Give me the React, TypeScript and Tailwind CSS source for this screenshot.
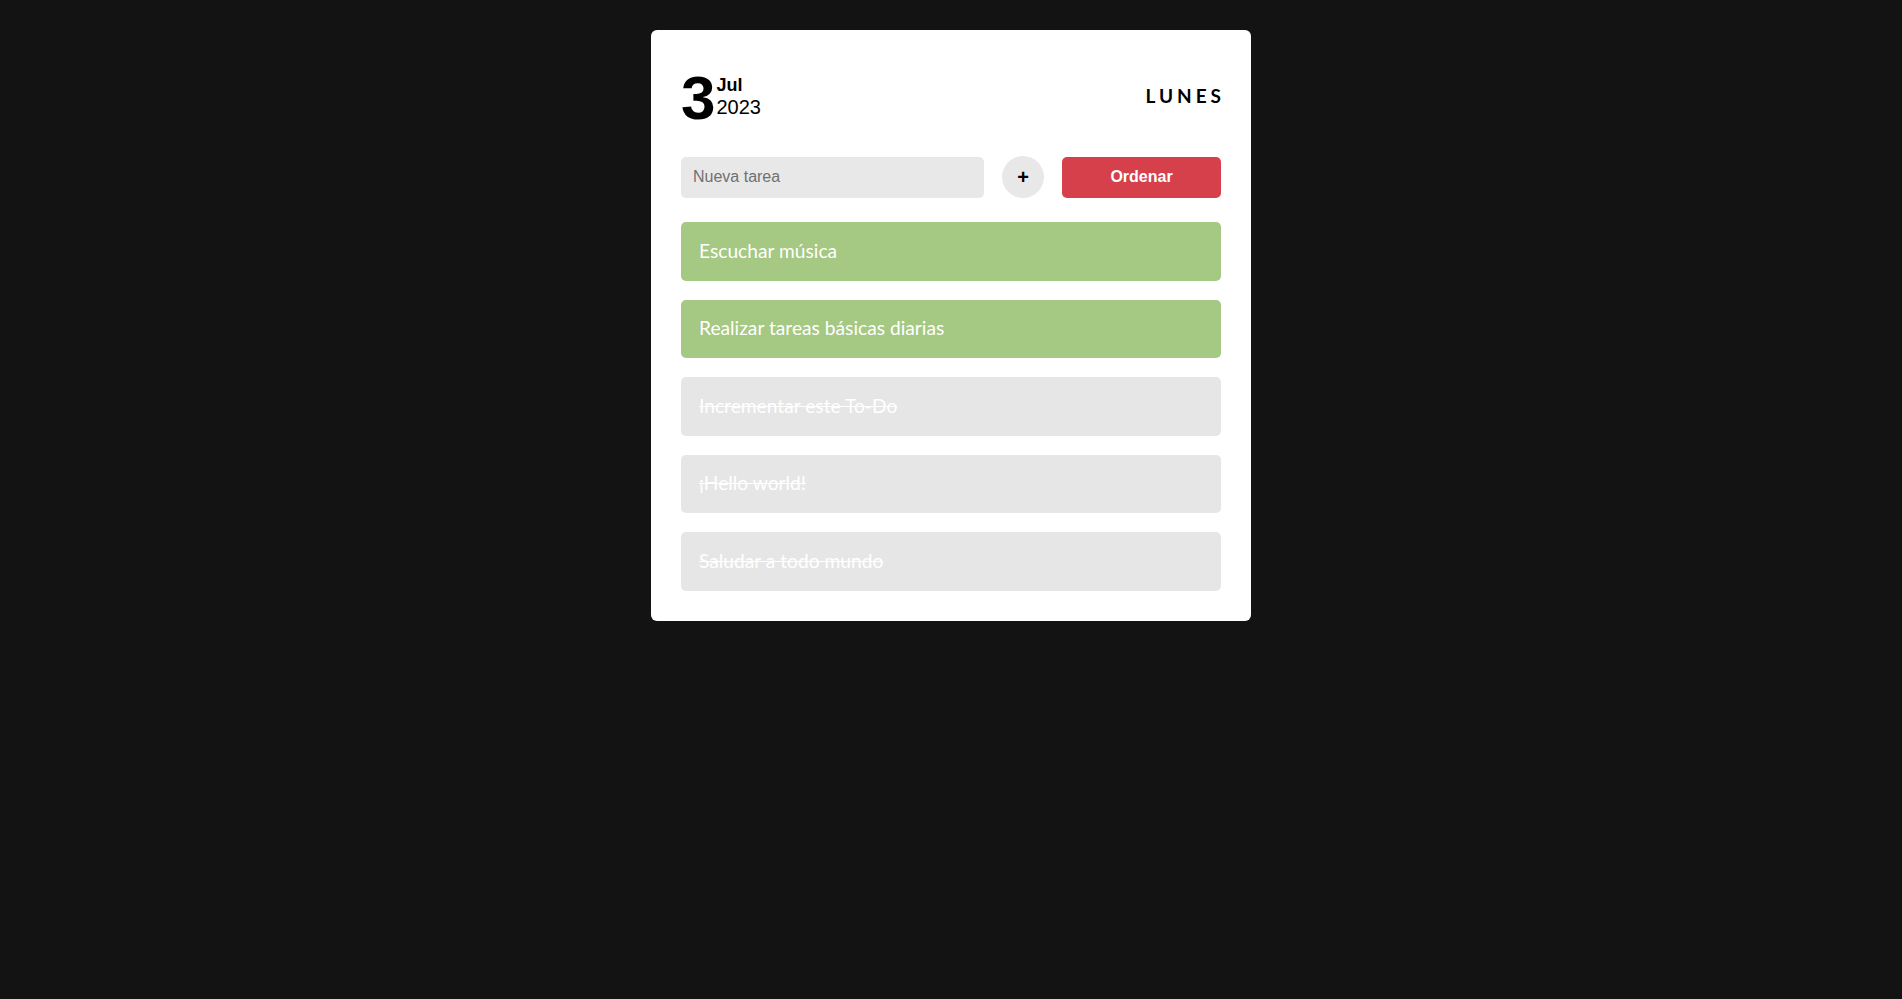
import { useState } from 'react';

interface Task {
  id: number;
  text: string;
  done: boolean;
}

const initialTasks: Task[] = [
  { id: 1, text: 'Escuchar música', done: false },
  { id: 2, text: 'Realizar tareas básicas diarias', done: false },
  { id: 3, text: 'Incrementar este To-Do', done: true },
  { id: 4, text: '¡Hello world!', done: true },
  { id: 5, text: 'Saludar a todo mundo', done: true },
];

export default function App() {
  const [tasks, setTasks] = useState<Task[]>(initialTasks);
  const [value, setValue] = useState('');

  const addTask = () => {
    if (!value.trim()) return;
    setTasks([...tasks, { id: Date.now(), text: value, done: false }]);
    setValue('');
  };

  const toggle = (id: number) => {
    setTasks(tasks.map((t) => (t.id === id ? { ...t, done: !t.done } : t)));
  };

  const sortTasks = () => {
    setTasks([...tasks].sort((a, b) => Number(a.done) - Number(b.done)));
  };

  return (
    <div className="min-h-screen bg-[#131313] flex justify-center items-start pt-[30px]">
      <div className="w-[600px] bg-white rounded-[6px] p-[30px]">
        {/* Header */}
        <div className="h-[72px] mb-[24px] flex items-center justify-between">
          <div className="flex items-start pt-[4px] font-['Liberation_Sans',Arial,sans-serif] text-black">
            <span className="text-[62px] leading-[62px] font-bold">3</span>
            <div className="flex flex-col mt-[8px] ml-[1px]">
              <span className="text-[18px] leading-[20px] font-bold">Jul</span>
              <span className="text-[20px] leading-[24px]">2023</span>
            </div>
          </div>
          <div className="font-['Lato',sans-serif] font-bold text-[19px] tracking-[4px] -mr-[4px] text-black">
            LUNES
          </div>
        </div>

        {/* Input row */}
        <div className="flex items-center gap-[18px] mb-[24px]">
          <input
            value={value}
            onChange={(e) => setValue(e.target.value)}
            placeholder="Nueva tarea"
            className="flex-1 min-w-0 h-[41px] rounded-[5px] bg-[#e8e8e9] px-[12px] text-[16px] font-['Liberation_Sans',Arial,sans-serif] text-black placeholder:text-[#707070] outline-none"
          />
          <button
            onClick={addTask}
            className="w-[42px] h-[42px] rounded-full bg-[#e8e8e9] flex items-center justify-center text-[20px] font-bold text-black font-['Liberation_Sans',Arial,sans-serif]"
          >
            +
          </button>
          <button
            onClick={sortTasks}
            className="w-[159px] h-[41px] rounded-[5px] bg-[#d6404b] text-white text-[16px] font-bold font-['Liberation_Sans',Arial,sans-serif]"
          >
            Ordenar
          </button>
        </div>

        {/* Tasks */}
        <div className="flex flex-col gap-[19px]">
          {tasks.map((t) => (
            <div
              key={t.id}
              onClick={() => toggle(t.id)}
              className={
                t.done
                  ? 'h-[58.5px] rounded-[5px] bg-[#e6e6e6] flex items-center px-[18px] cursor-pointer'
                  : 'h-[58.5px] rounded-[5px] bg-[#a5c882] flex items-center px-[18px] cursor-pointer'
              }
            >
              <span
                className={
                  t.done
                    ? "font-['Lato',sans-serif] text-[19.2px] text-white line-through"
                    : "font-['Lato',sans-serif] text-[19.2px] text-white"
                }
              >
                {t.text}
              </span>
            </div>
          ))}
        </div>
      </div>
    </div>
  );
}
